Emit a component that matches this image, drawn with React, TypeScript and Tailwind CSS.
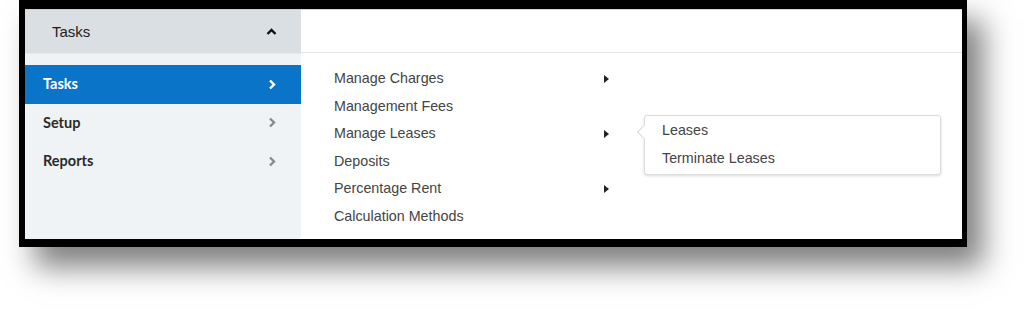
import React from 'react';

const sideItems = [
  { label: 'Tasks', active: true },
  { label: 'Setup', active: false },
  { label: 'Reports', active: false },
];

const taskItems = [
  { label: 'Manage Charges', sub: true },
  { label: 'Management Fees', sub: false },
  { label: 'Manage Leases', sub: true, open: true },
  { label: 'Deposits', sub: false },
  { label: 'Percentage Rent', sub: true },
  { label: 'Calculation Methods', sub: false },
];

function ChevronRight({ className }: { className?: string }) {
  return (
    <svg width="8" height="11" viewBox="0 0 8 11" className={className}>
      <polyline points="2,1.5 6,5.5 2,9.5" fill="none" stroke="currentColor" strokeWidth="2.4" />
    </svg>
  );
}

function ChevronUp() {
  return (
    <svg width="11" height="8" viewBox="0 0 11 8" className="text-[#111]">
      <polyline points="1.5,6 5.5,2 9.5,6" fill="none" stroke="currentColor" strokeWidth="2.4" />
    </svg>
  );
}

function Caret() {
  return (
    <svg width="5" height="8" viewBox="0 0 5 8" className="text-[#222]">
      <polygon points="0,0 5,4 0,8" fill="currentColor" />
    </svg>
  );
}

export default function App() {
  return (
    <div className="w-[1030px] h-[310px] bg-white relative">
      <div className="ml-[19px] w-[948px] h-[247px] border-black border-l-[6px] border-t-[9px] border-r-[5px] border-b-[8px] bg-white shadow-[16px_20px_28px_rgba(0,0,0,0.5)] flex">
        {/* left column */}
        <div className="w-[276px] flex flex-col">
          <div className="h-[44px] bg-[#d9dfe2] border-t border-[#c9cfd2] flex items-center justify-between pl-[27px] pr-[24px] pt-[1px] font-['Liberation_Sans',Arial,sans-serif] text-[15px] text-[#1e1e1e]">
            <span>Tasks</span>
            <ChevronUp />
          </div>
          <div className="flex-1 bg-[#f0f3f5] border-t border-[#e6eaec] pt-[11px] rounded-br-[4px] font-['Lato','Open_Sans',sans-serif] text-[14.5px] font-bold">
            {sideItems.map(item => (
              <div
                key={item.label}
                className={`h-[38.5px] flex items-center justify-between pl-[18px] pr-[25px] ${
                  item.active ? 'bg-[#0a74c8] text-white' : 'text-[#2a2a2a]'
                }`}
              >
                <span>{item.label}</span>
                <ChevronRight className={item.active ? 'text-white' : 'text-[#8a8a8a]'} />
              </div>
            ))}
          </div>
        </div>

        {/* right column */}
        <div className="flex-1 flex flex-col font-['Liberation_Sans',Arial,sans-serif] text-[14.3px] text-[#444]">
          <div className="h-[44px] border-t border-[#d4d4d4] border-b border-b-[#e4e4e4]" />
          <div className="relative pt-[12px] pl-[33px]">
            {taskItems.map(item => (
              <div key={item.label} className="relative h-[27.6px] w-[275px] flex items-center justify-between">
                <span>{item.label}</span>
                {item.sub && <Caret />}
                {item.open && (
                  <div className="absolute left-[310px] top-[-5px] w-[297px] h-[60px] bg-white border border-[#dcdcdc] rounded-[3px] shadow-[0_1px_3px_rgba(0,0,0,0.15)] pt-[1px]">
                    <div className="absolute left-[-6px] top-[11px] w-[10px] h-[10px] bg-white border-l border-b border-[#dcdcdc] rotate-45" />
                    <div className="h-[28px] flex items-center pl-[17px] text-[#444]">Leases</div>
                    <div className="h-[28px] flex items-center pl-[17px] text-[#444]">Terminate Leases</div>
                  </div>
                )}
              </div>
            ))}
          </div>
        </div>
      </div>
    </div>
  );
}
